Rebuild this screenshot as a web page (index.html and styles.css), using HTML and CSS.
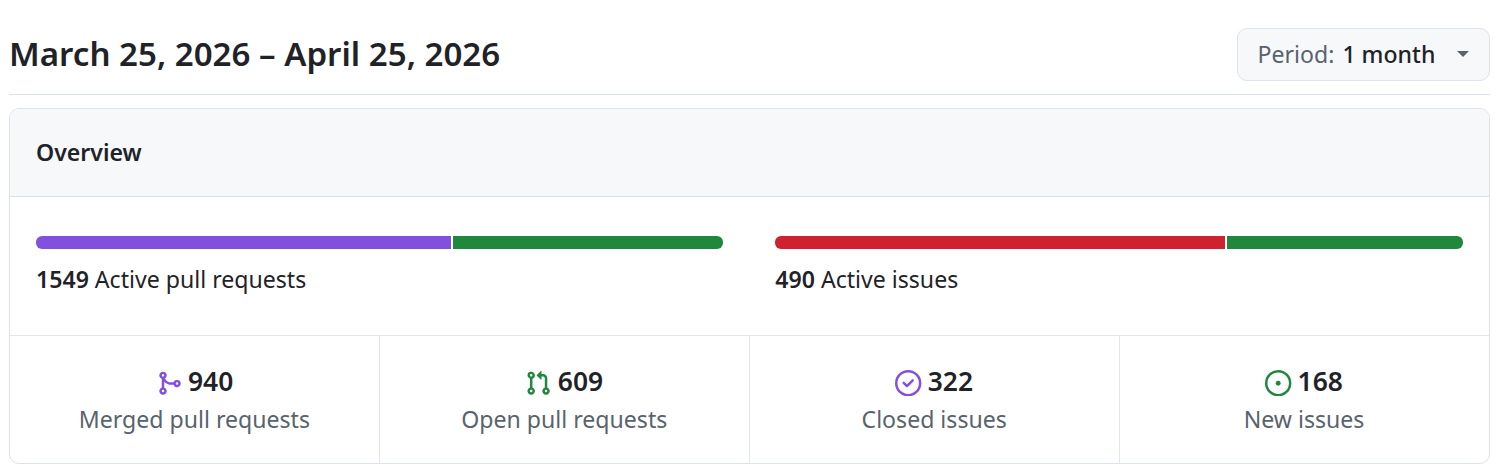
FILE: index.html
```html
<!DOCTYPE html>
<html lang="en">

<head>
    <meta charset="UTF-8">
    <title>Pulse</title>
    <link rel="stylesheet" href="styles.css">
</head>

<body>
    <div class="page-head">
        <h2 class="range">March 25, 2026 – April 25, 2026</h2>
        <button class="period">
            <span class="period-text">Period: <span class="period-value">1 month</span></span>
            <span class="caret"></span>
        </button>
    </div>

    <div class="box">
        <div class="box-header">Overview</div>

        <div class="bars">
            <div class="bar-col">
                <div class="bar">
                    <span class="seg purple" style="width: 60.6%"></span>
                    <span class="seg green" style="width: 39.4%"></span>
                </div>
                <p class="bar-text"><b>1549</b> Active pull requests</p>
            </div>
            <div class="bar-col">
                <div class="bar">
                    <span class="seg red" style="width: 65.7%"></span>
                    <span class="seg green" style="width: 34.3%"></span>
                </div>
                <p class="bar-text"><b>490</b> Active issues</p>
            </div>
        </div>

        <ul class="stats">
            <li class="stat">
                <div class="stat-num">
                    <svg class="icon fill-purple" viewBox="0 0 16 16"><path d="M5.45 5.154A4.25 4.25 0 0 0 9.25 7.5h1.378a2.251 2.251 0 1 1 0 1.5H9.25A5.734 5.734 0 0 1 5 7.123v3.505a2.25 2.25 0 1 1-1.5 0V5.372a2.25 2.25 0 1 1 1.95-.218ZM4.25 13.5a.75.75 0 1 0 0-1.5.75.75 0 0 0 0 1.5Zm8.5-4.5a.75.75 0 1 0 0-1.5.75.75 0 0 0 0 1.5ZM5 3.25a.75.75 0 1 0 0 .005V3.25Z"/></svg>
                    940
                </div>
                <div class="stat-label">Merged pull requests</div>
            </li>
            <li class="stat">
                <div class="stat-num">
                    <svg class="icon fill-green" viewBox="0 0 16 16"><path d="M1.5 3.25a2.25 2.25 0 1 1 3 2.122v5.256a2.251 2.251 0 1 1-1.5 0V5.372A2.25 2.25 0 0 1 1.5 3.25Zm5.677-.177L9.573.677A.25.25 0 0 1 10 .854V2.5h1A2.5 2.5 0 0 1 13.5 5v5.628a2.251 2.251 0 1 1-1.5 0V5a1 1 0 0 0-1-1h-1v1.646a.25.25 0 0 1-.427.177L7.177 3.427a.25.25 0 0 1 0-.354ZM3.75 2.5a.75.75 0 1 0 0 1.5.75.75 0 0 0 0-1.5Zm0 9.5a.75.75 0 1 0 0 1.5.75.75 0 0 0 0-1.5Zm8.25.75a.75.75 0 1 0 1.5 0 .75.75 0 0 0-1.5 0Z"/></svg>
                    609
                </div>
                <div class="stat-label">Open pull requests</div>
            </li>
            <li class="stat">
                <div class="stat-num">
                    <svg class="icon fill-purple" viewBox="0 0 16 16"><path d="M11.28 6.78a.75.75 0 0 0-1.06-1.06L7.25 8.69 5.78 7.22a.75.75 0 0 0-1.06 1.06l2 2a.75.75 0 0 0 1.06 0l3.5-3.5Z"/><path d="M16 8A8 8 0 1 1 0 8a8 8 0 0 1 16 0Zm-1.5 0a6.5 6.5 0 1 0-13 0 6.5 6.5 0 0 0 13 0Z"/></svg>
                    322
                </div>
                <div class="stat-label">Closed issues</div>
            </li>
            <li class="stat">
                <div class="stat-num">
                    <svg class="icon fill-green" viewBox="0 0 16 16"><path d="M8 9.5a1.5 1.5 0 1 0 0-3 1.5 1.5 0 0 0 0 3Z"/><path d="M8 0a8 8 0 1 1 0 16A8 8 0 0 1 8 0ZM1.5 8a6.5 6.5 0 1 0 13 0 6.5 6.5 0 0 0-13 0Z"/></svg>
                    168
                </div>
                <div class="stat-label">New issues</div>
            </li>
        </ul>
    </div>
</body>

</html>
```

FILE: styles.css
```css
html,
body,
h2,
p,
ul,
li {
    padding: 0;
    margin: 0;
}

ul {
    list-style: none;
}

body {
    padding: 0 6.5px 0 9px;
    font-family: "Noto Sans", sans-serif;
    font-size: 23.1px;
    color: #1f2328;
    background-color: #fff;
}

.page-head {
    display: flex;
    justify-content: space-between;
    align-items: center;
    height: 80px;
    padding-top: 14px;
    border-bottom: 1px solid #dde3ea;
    margin-bottom: 13px;
}

.range {
    font-size: 33.1px;
    font-weight: 600;
    line-height: 40px;
}

.period {
    display: flex;
    align-items: center;
    width: 253px;
    height: 53px;
    padding: 0 20px;
    box-sizing: border-box;
    border: 1px solid #dde3ea;
    border-radius: 10px;
    background-color: #f6f8fa;
    font-family: inherit;
    font-size: 23.1px;
    color: #59636e;
}

.period-value {
    margin-left: 2px;
    color: #1f2328;
    font-weight: 500;
}

.caret {
    width: 0;
    height: 0;
    margin-left: auto;
    border-top: 6px solid #59636e;
    border-left: 6px solid transparent;
    border-right: 6px solid transparent;
}

.box {
    border: 1px solid #dde3ea;
    border-radius: 10px;
    overflow: hidden;
}

.box-header {
    display: flex;
    align-items: center;
    height: 86px;
    padding-left: 26px;
    padding-bottom: 1px;
    background-color: #f6f8fa;
    border-bottom: 1px solid #d8dfe6;
    font-weight: 600;
}

.bars {
    display: flex;
    gap: 52px;
    padding: 39px 26px 0;
    height: 99px;
    border-bottom: 1px solid #e1e6eb;
}

.bar-col {
    flex: 1;
}

.bar {
    display: flex;
    gap: 2px;
    height: 13px;
    border-radius: 6px;
    overflow: hidden;
    margin-bottom: 14px;
}

.seg {
    display: block;
}

.purple {
    background-color: #8250df;
}

.green {
    background-color: #1f883d;
}

.red {
    background-color: #cf222e;
}

.bar-text {
    line-height: 32px;
}

.bar-text b {
    font-weight: 600;
}

.stats {
    display: flex;
}

.stat {
    flex: 1;
    height: 127px;
    padding-top: 26px;
    box-sizing: border-box;
    text-align: center;
    border-right: 1px solid #e1e6eb;
}

.stat:last-child {
    border-right: none;
}

.stat-num {
    display: flex;
    justify-content: center;
    align-items: center;
    gap: 6px;
    font-size: 26.4px;
    font-weight: 600;
    line-height: 38px;
}

.stat-label {
    color: #59636e;
    line-height: 38px;
}

.icon {
    width: 26.4px;
    height: 26.4px;
    margin-top: 4px;
}

.fill-purple {
    fill: #8250df;
}

.fill-green {
    fill: #1f883d;
}
```
